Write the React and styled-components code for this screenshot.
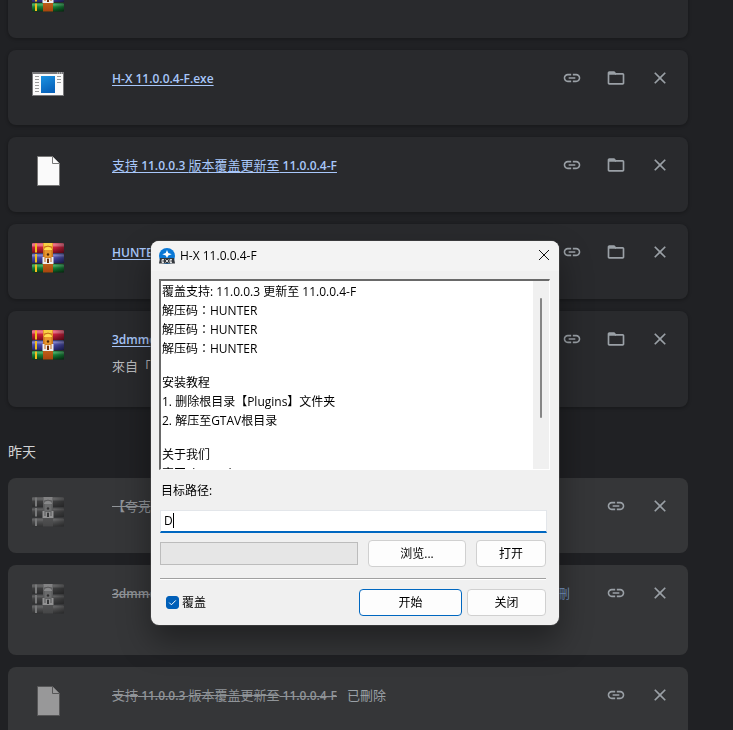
import React, {useState} from 'react';
import styled, {createGlobalStyle, css} from 'styled-components';

const GlobalStyle = createGlobalStyle`
  * {
    box-sizing: border-box;
  }
  body {
    margin: 0;
    background: #202124;
    color: #e8eaed;
    font-family: "Open Sans", "Noto Sans CJK TC", sans-serif;
    font-size: 13px;
    line-height: 20px;
  }
`;

const Page = styled.main`
  height: 100vh;
  overflow: hidden;
  padding: 0 8px;
`;

const List = styled.section`
  max-width: 680px;
  display: flex;
  flex-direction: column;
  gap: 12px;
  margin-top: ${({$scrolled}) => ($scrolled ? '-37px' : '0')};
`;

const DayTitle = styled.h2`
  margin: 35px 0 16px;
  color: #d2d3d5;
  font-size: 14px;
  font-weight: 400;
  line-height: 20px;
`;

const Card = styled.article`
  display: flex;
  align-items: flex-start;
  min-height: ${({$size}) => ({small: '75px', medium: '90px', large: '96px'})[$size || 'small']};
  padding: 18px 16px 0 24px;
  border-radius: 8px;
  background: #292a2d;
  box-shadow: 0 1px 3px 1px rgba(0, 0, 0, 0.2);
  ${({$removed}) => $removed && css`
    background: #353638;
    box-shadow: none;
  `}
`;

const FileIcon = styled.svg`
  flex: none;
  width: 32px;
  height: 32px;
  margin-right: 48px;
  ${({$removed}) => $removed && css`
    filter: grayscale(1);
    opacity: 0.5;
  `}
`;

const Info = styled.div`
  flex: 1;
  min-width: 0;
  max-width: 458px;
  margin-right: auto;
  overflow: hidden;
  white-space: nowrap;
`;

const FileLink = styled.a`
  color: #a8c7fa;
  text-underline-offset: 2px;
`;

const RemovedName = styled.s`
  display: inline-block;
  max-width: 422px;
  margin-right: 10px;
  overflow: hidden;
  color: #909498;
  text-overflow: ellipsis;
  vertical-align: top;
`;

const Latin = styled.span`
  font-size: 12px;
  font-weight: 600;
`;

const Status = styled.span`
  color: ${({$accent}) => ($accent ? '#7391bd' : '#9aa0a6')};
`;

const Source = styled.p`
  margin: 6px 0 0;
  color: #b9bbbe;
`;

const Actions = styled.div`
  display: flex;
  flex: none;
  gap: 20px;
`;

const IconButton = styled.button`
  display: flex;
  align-items: center;
  justify-content: center;
  width: 24px;
  height: 20px;
  padding: 0;
  border: 0;
  background: none;
  color: #9aa0a6;

  svg {
    width: 20px;
    height: 20px;
    fill: currentColor;
  }
`;

const Dialog = styled.div`
  position: fixed;
  top: 241px;
  left: 151px;
  width: 408px;
  overflow: hidden;
  border-radius: 8px;
  background: #f0f0f0;
  color: #000;
  font-family: "Open Sans", "Noto Sans CJK TC", sans-serif;
  font-size: 12px;
  line-height: 19px;
  box-shadow: 0 0 0 1px rgba(70, 70, 70, 0.6), 0 16px 32px rgba(0, 0, 0, 0.4);
`;

const TitleBar = styled.header`
  display: flex;
  align-items: center;
  height: 30px;
  padding: 0 8px;
  background: #f3f3f3;
`;

const AppIcon = styled.svg`
  width: 16px;
  height: 16px;
  margin-right: 5px;
`;

const Title = styled.h1`
  flex: 1;
  margin: 0;
  font-size: 12px;
  font-weight: 400;
  line-height: 18px;
`;

const CloseButton = styled.button`
  display: flex;
  padding: 0 2px 2px;
  border: 0;
  background: none;

  svg {
    width: 10px;
    height: 10px;
    overflow: visible;
    stroke: #111;
  }
`;

const Body = styled.div`
  padding: 8px 13px 9px 9px;
`;

const Notes = styled.div`
  display: flex;
  height: 191px;
  margin-right: -4px;
  margin-left: -1px;
  border: 1px solid #fff;
  border-top: 2px solid #696969;
  border-left: 2px solid #696969;
  background: #fff;
`;

const NotesText = styled.div`
  flex: 1;
  overflow: hidden;
  padding: 1px 1px 0;

  p {
    min-height: 15px;
    margin: 0;
  }
`;

const ScrollBar = styled.div`
  width: 16px;
  padding: 17px 7px 0;
  background: #f0f0f0;
`;

const Thumb = styled.div`
  width: 2px;
  height: 120px;
  border-radius: 1px;
  background: #868686;
`;

const PathLabel = styled.label`
  display: block;
  margin: 11px 0 10px 1px;
`;

const PathField = styled.div`
  position: relative;
  margin-right: -1px;
`;

const PathInput = styled.input`
  display: block;
  width: 100%;
  height: 23px;
  padding: 0 3px 2px;
  border: 1px solid #e3e6ea;
  border-bottom: 2px solid #0067c0;
  background: #fff;
  color: #000;
  caret-color: transparent;
  font: inherit;
  outline: none;
`;

const Caret = styled.span`
  position: absolute;
  top: 3px;
  width: 1px;
  height: 15px;
  background: #000;
`;

const Row = styled.div`
  display: flex;
  align-items: center;
  gap: ${({$gap}) => $gap};
  margin-top: 7px;
`;

const Progress = styled.div`
  flex: 1;
  height: 23px;
  border: 1px solid #bcbcbc;
  background: #e6e6e6;
`;

const Button = styled.button`
  width: ${({$width}) => $width};
  height: 27px;
  padding: 0;
  border: 1px solid ${({$primary}) => ($primary ? '#0067c0' : '#d0d0d0')};
  border-radius: 4px;
  background: #fdfdfd;
  color: #000;
  font: inherit;
`;

const Divider = styled.hr`
  margin: 11px 0 9px;
  border: 0;
  border-top: 1px solid #a0a0a0;
  border-bottom: 1px solid #fff;
`;

const CheckLabel = styled.label`
  display: flex;
  flex: 1;
  align-items: center;
  gap: 3px;
  padding-left: 6px;
`;

const CheckBox = styled.input`
  appearance: none;
  width: 13px;
  height: 13px;
  margin: 0;
  border: 1px solid #868686;
  border-radius: 3px;
  background: #fff;

  &:checked {
    border-color: #005fb8;
    background: #005fb8 url("data:image/svg+xml,%3Csvg xmlns='http://www.w3.org/2000/svg' viewBox='0 0 11 11'%3E%3Cpath d='M2.2 5.6l2.2 2.2 4.4-4.4' fill='none' stroke='white'/%3E%3C/svg%3E");
  }
`;

function ArchiveIcon({removed}) {
    return (
        <FileIcon viewBox="0 0 32 32" $removed={removed} aria-hidden="true">
            <defs>
                <linearGradient id="red" x2="0" y2="1">
                    <stop offset="0" stopColor="#d9536c"/>
                    <stop offset="0.2" stopColor="#f07f95"/>
                    <stop offset="0.45" stopColor="#c81f3c"/>
                    <stop offset="1" stopColor="#7a0c1e"/>
                </linearGradient>
                <linearGradient id="blue" x2="0" y2="1">
                    <stop offset="0" stopColor="#5456a8"/>
                    <stop offset="0.2" stopColor="#8284cc"/>
                    <stop offset="0.45" stopColor="#4648a5"/>
                    <stop offset="1" stopColor="#25276a"/>
                </linearGradient>
                <linearGradient id="green" x2="0" y2="1">
                    <stop offset="0" stopColor="#258645"/>
                    <stop offset="0.2" stopColor="#4fae6a"/>
                    <stop offset="0.45" stopColor="#168238"/>
                    <stop offset="1" stopColor="#073b16"/>
                </linearGradient>
                <linearGradient id="strap" x2="0" y2="1">
                    <stop offset="0" stopColor="#f0a030"/>
                    <stop offset="1" stopColor="#a8440e"/>
                </linearGradient>
                <linearGradient id="shade">
                    <stop offset="0.7" stopColor="#000" stopOpacity="0"/>
                    <stop offset="1" stopColor="#000" stopOpacity="0.35"/>
                </linearGradient>
            </defs>
            <rect y="1" width="32" height="10" rx="1" fill="url(#red)"/>
            <rect y="11.500" width="32" height="9.500" rx="1" fill="url(#blue)"/>
            <rect y="22" width="32" height="8.500" rx="1" fill="url(#green)"/>
            <path d="M3 1.500h2v9H3zM3 12h2v8.500H3zM3 22.500h2v7.500H3z" fill="#f2bd1d"/>
            <path d="M0 1h32v10H0zM0 11.500h32V21H0zM0 22h32v8.500H0z" fill="url(#shade)"/>
            <path d="M11 1h10v29.500H11z" fill="url(#strap)"/>
            <path d="M12 1h8v3h-8z" fill="#f7d044"/>
            <path d="M12 8q0-4 4-4t4 4v8h-8z" fill="#e8962c" stroke="#a75a12" strokeWidth="0.6"/>
            <path d="M12 8q0-3 4-3t4 3z" fill="#ffdc4f"/>
            <circle cx="16" cy="12.500" r="1.200" fill="#4b2409"/>
            <path d="M11.500 15v6h9v-6M14.500 16v5M17.500 16v5" fill="none" stroke="#eee" strokeWidth="2"/>
            <path d="M15 17h2v4h-2z" fill="#6c2d0b"/>
        </FileIcon>
    )
}

function ExeIcon() {
    return (
        <FileIcon viewBox="0 0 32 32" aria-hidden="true">
            <defs>
                <linearGradient id="window" x2="0.4" y2="1">
                    <stop offset="0" stopColor="#1b93e2"/>
                    <stop offset="1" stopColor="#0863bb"/>
                </linearGradient>
            </defs>
            <path d="M0 4h32v24H0z" fill="#77777a"/>
            <path d="M1 6h30v21H1z" fill="#fafafa"/>
            <path d="M25 5h1M27 5h1M29 5h1" stroke="#ddd"/>
            <path d="M9 8h14v17H9z" fill="url(#window)"/>
            <path d="M3 8.500h4M3 11.500h4M3 14.500h4M3 17.500h4M3 20.500h4M3 23.500h4M25 8.500h4M25 11.500h4M25 14.500h4" stroke="#999"/>
        </FileIcon>
    )
}

function BlankIcon({removed}) {
    return (
        <FileIcon viewBox="0 0 32 32" $removed={removed} aria-hidden="true">
            <path d="M5.500 1.500h15l7 7v22h-22z" fill="#fafafa" stroke="#777"/>
            <path d="M20.500 1.500v7h7" fill="#fafafa" stroke="#777"/>
        </FileIcon>
    )
}

function CardActions({removed}) {
    return (
        <Actions>
            <IconButton aria-label="複製連結">
                <svg viewBox="0 0 24 24">
                    <path d="M3.900 12c0-1.710 1.390-3.100 3.100-3.100h4V7H7c-2.760 0-5 2.240-5 5s2.240 5 5 5h4v-1.900H7c-1.710 0-3.100-1.390-3.100-3.100zM8 13h8v-2H8v2zm9-6h-4v1.900h4c1.710 0 3.100 1.390 3.100 3.100s-1.390 3.100-3.100 3.100h-4V17h4c2.760 0 5-2.240 5-5s-2.240-5-5-5z"/>
                </svg>
            </IconButton>
            {!removed && (
                <IconButton aria-label="在資料夾中顯示">
                    <svg viewBox="0 0 24 24">
                        <path d="M9.170 6l2 2H20v10H4V6h5.170M10 4H4c-1.100 0-1.990.9-1.990 2L2 18c0 1.100.9 2 2 2h16c1.100 0 2-.9 2-2V8c0-1.100-.9-2-2-2h-8l-2-2z"/>
                        <path d="M3 5h7l2 2v1H3z"/>
                    </svg>
                </IconButton>
            )}
            <IconButton aria-label="移除">
                <svg viewBox="0 0 24 24">
                    <path d="M19 6.410L17.590 5 12 10.590 6.410 5 5 6.410 10.590 12 5 17.590 6.410 19 12 13.410 17.590 19 19 17.590 13.410 12z"/>
                </svg>
            </IconButton>
        </Actions>
    )
}

// Latin runs of a file name are semibold, Chinese runs stay regular
function FileName({children}) {
    return children
        .split(/([\u3000-\u9fff]+)/)
        .map((part, i) => (i % 2 ? part : <Latin key={i}>{part}</Latin>));
}

function Download({icon, name, source, size}) {
    return (
        <Card $size={size}>
            {icon}
            <Info>
                <FileLink href="#"><FileName>{name}</FileName></FileLink>
                {source && <Source>{source}</Source>}
            </Info>
            <CardActions/>
        </Card>
    )
}

function RemovedDownload({icon, name, size, status, accent}) {
    return (
        <Card $removed $size={size}>
            {icon}
            <Info>
                <RemovedName><FileName>{name}</FileName></RemovedName>
                {status && <Status $accent={accent}>{status}</Status>}
            </Info>
            <CardActions removed/>
        </Card>
    )
}

const notes = [
    '覆盖支持: 11.0.0.3 更新至 11.0.0.4-F',
    '解压码：HUNTER',
    '解压码：HUNTER',
    '解压码：HUNTER',
    '',
    '安装教程',
    '1. 删除根目录【Plugins】文件夹',
    '2. 解压至GTAV根目录',
    '',
    '关于我们',
    '官网: hxmod.net',
];

function ExtractDialog() {
    const [path, setPath] = useState('D');
    const [overwrite, setOverwrite] = useState(true);

    return (
        <Dialog role="dialog" aria-labelledby="dialog-title">
            <TitleBar>
                <AppIcon viewBox="0 0 16 16" aria-hidden="true">
                    <circle cx="8" cy="8" r="8" fill="#0a78d6"/>
                    <path d="M8 2l1.300 3 3.400 1.200-3.400 1.200L8 10 6.700 7.400 3.300 6.200l3.400-1.200z" fill="#fff"/>
                    <path d="M1 10h14l1 5.500H0z" fill="#34383e"/>
                    <path d="M5 11.500H3v3h2M3 13h2M6.500 11.500l3 3M9.500 11.500l-3 3M13 11.500h-2v3h2M11 13h2" fill="none" stroke="#fff" strokeWidth="0.8"/>
                </AppIcon>
                <Title id="dialog-title">H-X 11.0.0.4-F</Title>
                <CloseButton aria-label="关闭窗口">
                    <svg viewBox="0 0 10 10"><path d="M0 0l10 10M10 0L0 10"/></svg>
                </CloseButton>
            </TitleBar>
            <Body>
                <Notes>
                    <NotesText>
                        {notes.map((line, i) => <p key={i}>{line}</p>)}
                    </NotesText>
                    <ScrollBar><Thumb/></ScrollBar>
                </Notes>
                <PathLabel htmlFor="path">目标路径:</PathLabel>
                <PathField>
                    <PathInput id="path" value={path} onChange={e => setPath(e.target.value)}/>
                    <Caret style={{left: 4 + path.length * 9}}/>
                </PathField>
                <Row $gap="10px">
                    <Progress role="progressbar" aria-label="进度"/>
                    <Button $width="98px">浏览...</Button>
                    <Button $width="70px">打开</Button>
                </Row>
                <Divider/>
                <Row $gap="5px">
                    <CheckLabel>
                        <CheckBox type="checkbox" checked={overwrite} onChange={e => setOverwrite(e.target.checked)}/>
                        覆盖
                    </CheckLabel>
                    <Button $width="103px" $primary>开始</Button>
                    <Button $width="79px">关闭</Button>
                </Row>
            </Body>
        </Dialog>
    )
}

function App() {
    return (
        <>
            <GlobalStyle/>
            <Page>
                <List $scrolled>
                    <Download icon={<ArchiveIcon/>} name="HUNTER.rar"/>
                    <Download icon={<ExeIcon/>} name="H-X 11.0.0.4-F.exe"/>
                    <Download icon={<BlankIcon/>} name="支持 11.0.0.3 版本覆盖更新至 11.0.0.4-F"/>
                    <Download icon={<ArchiveIcon/>} name="HUNTER.rar"/>
                    <Download icon={<ArchiveIcon/>} name="3dmmods.rar" source="來自「3dmmods」" size="large"/>
                </List>
                <DayTitle>昨天</DayTitle>
                <List>
                    <RemovedDownload icon={<ArchiveIcon removed/>} name="【夸克】"/>
                    <RemovedDownload
                        icon={<ArchiveIcon removed/>}
                        name="3dmmods_HUNTER_11.0.0.3_GTAV_Plugins_HUNTER_11.0.0.4-F_Plugins.rar"
                        size="medium"
                        status="已刪除"
                        accent
                    />
                    <RemovedDownload icon={<BlankIcon removed/>} name="支持 11.0.0.3 版本覆盖更新至 11.0.0.4-F" status="已刪除"/>
                </List>
            </Page>
            <ExtractDialog/>
        </>
    )
}

export default App;
